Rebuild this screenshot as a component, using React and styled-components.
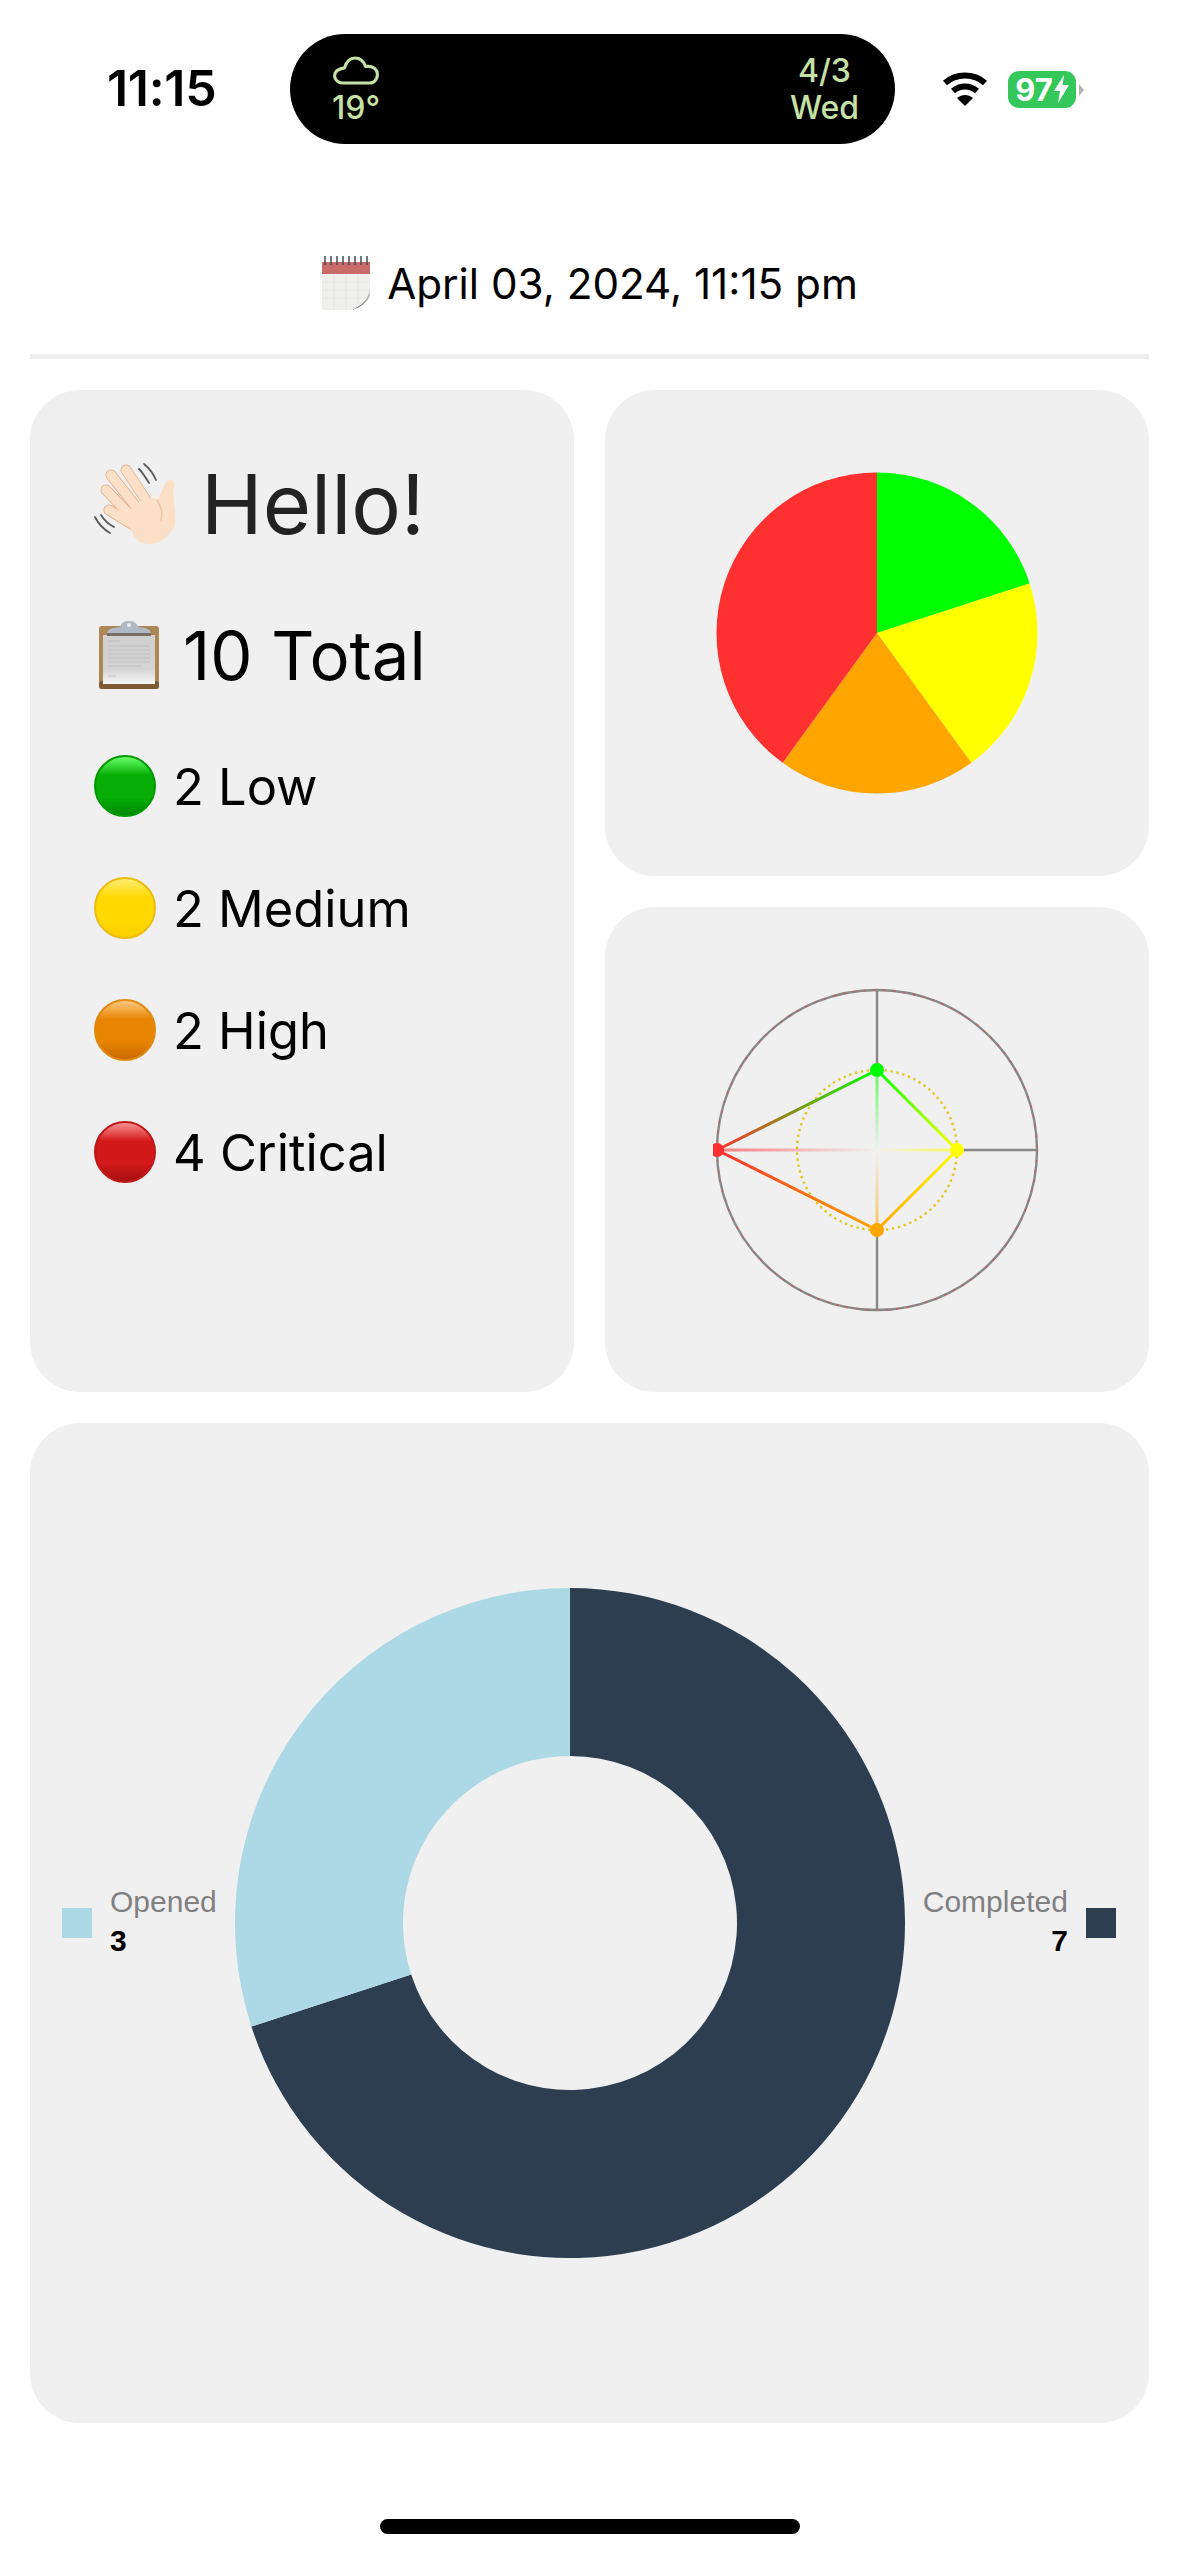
import React from 'react';
import styled, { createGlobalStyle } from 'styled-components';

const GlobalStyle = createGlobalStyle`
  html, body {
    margin: 0;
    padding: 0;
    background: #fff;
    font-family: Inter, "Liberation Sans", sans-serif;
  }
`;

const Page = styled.div`
  width: 1179px;
  height: 2556px;
  overflow: hidden;
  display: flex;
  flex-direction: column;
`;

const StatusBar = styled.div`
  display: flex;
  align-items: center;
  height: 110px;
  padding: 34px 0 0 107px;
`;

const Clock = styled.div`
  width: 183px;
  flex: none;
  font-size: 50px;
  font-weight: 600;
  letter-spacing: -0.3px;
  margin-top: -3px;
  color: #000;
`;

const Island = styled.div`
  width: 605px;
  height: 110px;
  flex: none;
  box-sizing: border-box;
  border-radius: 55px;
  background: #000;
  color: #c5e1a5;
  display: flex;
  align-items: center;
  justify-content: space-between;
  padding: 0 36px 0 42px;
  margin-right: 47px;
`;

const IslandColumn = styled.div`
  display: flex;
  flex-direction: column;
  align-items: center;
  font-size: 32px;
  font-weight: 500;
  line-height: 37px;
`;

const WeatherColumn = styled(IslandColumn)`
  gap: 3px;
  padding-top: 3px;
`;

const StatusIcons = styled.div`
  display: flex;
  align-items: center;
  gap: 20px;
`;

const Battery = styled.div`
  position: relative;
  width: 68px;
  height: 37px;
  border-radius: 11px;
  background: #34c759;
  color: #fff;
  font-size: 31px;
  font-weight: 700;
  display: flex;
  align-items: center;
  justify-content: center;
  gap: 1px;
  &::after {
    content: '';
    position: absolute;
    right: -8px;
    top: 13px;
    border-left: 5px solid #b5b5b5;
    border-top: 6px solid transparent;
    border-bottom: 6px solid transparent;
  }
`;

const DateHeader = styled.div`
  display: flex;
  justify-content: center;
  align-items: center;
  gap: 16px;
  padding: 112px 0 44px;
  font-size: 42.2px;
  color: #000;
`;

const Divider = styled.div`
  height: 5px;
  margin: 0 30px;
  background: #eee;
`;

const Dashboard = styled.div`
  display: grid;
  grid-template-columns: 544px 544px;
  grid-template-rows: 486px 485px;
  gap: 31px;
  padding: 31px 30px 0;
`;

const Card = styled.div`
  background: #f0f0f0;
  border-radius: 50px;
  display: flex;
  align-items: center;
  justify-content: center;
`;

const SummaryCard = styled(Card)`
  grid-row: span 2;
  flex-direction: column;
  align-items: flex-start;
  justify-content: flex-start;
  box-sizing: border-box;
  padding: 53px 0 0 63px;
`;

const Greeting = styled.div`
  display: flex;
  align-items: center;
  gap: 24px;
  height: 122px;
  font-size: 83px;
  color: #222;
`;

const TotalRow = styled.div`
  display: flex;
  align-items: center;
  gap: 23px;
  height: 180px;
  padding-left: 5px;
  font-size: 67px;
  color: #000;
`;

const LevelList = styled.div`
  display: flex;
  flex-direction: column;
  gap: 40px;
`;

const LevelRow = styled.div`
  display: flex;
  align-items: center;
  gap: 17px;
  height: 82px;
  padding-left: 1px;
  font-size: 50.6px;
  color: #000;
`;

const Ball = styled.span`
  width: 62px;
  height: 62px;
  flex: none;
  box-sizing: border-box;
  border-radius: 50%;
  border: 2px solid ${(props) => props.$edge};
  background: linear-gradient(
    ${(props) => props.$light} 0%,
    ${(props) => props.$mid} 32%,
    ${(props) => props.$mid} 70%,
    ${(props) => props.$dark} 100%
  );
`;

const DonutCard = styled(Card)`
  height: 1000px;
  margin: 31px 30px 0;
  justify-content: flex-start;
  gap: 18px;
  padding-left: 32px;
`;

const Legend = styled.div`
  display: flex;
  align-items: center;
  gap: 18px;
  font-family: "Liberation Sans", Arial, sans-serif;
  font-size: 30px;
  line-height: 37px;
  text-align: ${(props) => (props.$right ? 'right' : 'left')};
`;

const Swatch = styled.span`
  width: 30px;
  height: 30px;
  flex: none;
  background: ${(props) => props.$color};
`;

const LegendText = styled.div`
  margin-top: -4px;
`;

const LegendName = styled.div`
  color: #808080;
  margin-bottom: 2px;
`;

const LegendValue = styled.div`
  color: #000;
  font-weight: 700;
`;

const HomeIndicator = styled.div`
  width: 420px;
  height: 15px;
  margin: 96px auto 0;
  border-radius: 8px;
  background: #000;
`;

const polar = (cx, cy, r, deg) => {
  const a = ((deg - 90) * Math.PI) / 180;
  return [cx + r * Math.cos(a), cy + r * Math.sin(a)];
};

const slice = (cx, cy, r, from, to) => {
  const [x1, y1] = polar(cx, cy, r, from);
  const [x2, y2] = polar(cx, cy, r, to);
  return `M${cx} ${cy}L${x1} ${y1}A${r} ${r} 0 ${to - from > 180 ? 1 : 0} 1 ${x2} ${y2}Z`;
};

const ring = (cx, cy, r, inner, from, to) => {
  const [x1, y1] = polar(cx, cy, r, from);
  const [x2, y2] = polar(cx, cy, r, to);
  const [x3, y3] = polar(cx, cy, inner, to);
  const [x4, y4] = polar(cx, cy, inner, from);
  const large = to - from > 180 ? 1 : 0;
  return `M${x1} ${y1}A${r} ${r} 0 ${large} 1 ${x2} ${y2}L${x3} ${y3}A${inner} ${inner} 0 ${large} 0 ${x4} ${y4}Z`;
};

const PIE = [
  { color: '#00ff00', from: 0, to: 72 },
  { color: '#ffff00', from: 72, to: 144 },
  { color: '#ffa500', from: 144, to: 216 },
  { color: '#ff3030', from: 216, to: 360 },
];

const PieChart = () => (
  <svg width="322" height="322" viewBox="0 0 322 322">
    {PIE.map((s) => (
      <path key={s.color} d={slice(161, 161, 160.5, s.from, s.to)} fill={s.color} />
    ))}
  </svg>
);

// radar points, clockwise from the top
const RADAR = [
  { id: 'g', color: '#00ff00', x: 164, y: 84 },
  { id: 'y', color: '#ffff00', x: 244, y: 164 },
  { id: 'o', color: '#ffa500', x: 164, y: 244 },
  { id: 'r', color: '#ff3030', x: 4, y: 164 },
];

const RadarChart = () => (
  <svg width="328" height="328" viewBox="0 0 328 328">
    <defs>
      {RADAR.map((p, i) => {
        const next = RADAR[(i + 1) % 4];
        return (
          <React.Fragment key={p.id}>
            <linearGradient id={`edge-${p.id}`} gradientUnits="userSpaceOnUse" x1={p.x} y1={p.y} x2={next.x} y2={next.y}>
              <stop offset="0" stopColor={p.color} />
              <stop offset="1" stopColor={next.color} />
            </linearGradient>
            <linearGradient id={`spoke-${p.id}`} gradientUnits="userSpaceOnUse" x1={p.x} y1={p.y} x2="164" y2="164">
              <stop offset="0" stopColor={p.color} stopOpacity="0.6" />
              <stop offset="1" stopColor={p.color} stopOpacity="0" />
            </linearGradient>
          </React.Fragment>
        );
      })}
    </defs>
    <circle cx="164" cy="164" r="160" fill="none" stroke="#888" strokeWidth="2.4" />
    <circle cx="164" cy="164" r="160" fill="none" stroke="#ff3030" strokeOpacity="0.6" strokeWidth="1.2" strokeDasharray="2 8" />
    <path d="M164 4V84M164 244V324M244 164H324" stroke="#888" strokeWidth="2.4" fill="none" />
    <circle cx="164" cy="164" r="80" fill="none" stroke="#e0c820" strokeWidth="2.4" strokeDasharray="2.4 3.6" />
    {RADAR.map((p) => (
      <line key={p.id} x1={p.x} y1={p.y} x2="164" y2="164" stroke={`url(#spoke-${p.id})`} strokeWidth="3" />
    ))}
    {RADAR.map((p, i) => {
      const next = RADAR[(i + 1) % 4];
      return <line key={p.id} x1={p.x} y1={p.y} x2={next.x} y2={next.y} stroke={`url(#edge-${p.id})`} strokeWidth="3" />;
    })}
    {RADAR.map((p) => (
      <circle key={p.id} cx={p.x} cy={p.y} r="7" fill={p.color} />
    ))}
  </svg>
);

const DonutChart = () => (
  <svg width="670" height="670" viewBox="0 0 670 670">
    <path d={ring(335, 335, 335, 167, 0, 252)} fill="#2c3e50" />
    <path d={ring(335, 335, 335, 167, 252, 360)} fill="#add8e6" />
  </svg>
);

const CloudIcon = () => (
  <svg width="46" height="31" viewBox="0 0 44 27" fill="none" stroke="#c5e1a5" strokeWidth="3" strokeLinejoin="round">
    <path d="M9 25.5H35C40 25.5 42.5 21 42.5 17.5C42.5 13 39 9.5 34 9.5L31 9.5C29 4 25 1.5 21 1.5C15.5 1.5 12.5 6 11 11C5 12 1.5 15 1.5 18.5C1.5 22.5 5 25.5 9 25.5Z" />
  </svg>
);

const WifiIcon = () => (
  <svg width="46" height="36" viewBox="0 0 46 36" fill="none" stroke="#000" strokeWidth="6">
    <path d="M3 12C14 2 32 2 43 12" />
    <path d="M11 20C18 14 28 14 35 20" />
    <path d="M15 27L23 35L31 27C26 23 20 23 15 27Z" fill="#000" stroke="none" />
  </svg>
);

const BoltIcon = () => (
  <svg width="15" height="28" viewBox="0 0 15 28" fill="#fff">
    <path d="M10 0L0 16H6L4 28L15 10H8.5Z" />
  </svg>
);

const CalendarIcon = () => (
  <svg width="50" height="54" viewBox="0 0 50 54">
    <defs>
      <linearGradient id="curl" x1="0" y1="1" x2="1" y2="0">
        <stop offset="0" stopColor="#444" />
        <stop offset="1" stopColor="#ddd" />
      </linearGradient>
    </defs>
    <rect x="1" y="8" width="48" height="46" fill="#efefed" />
    <path d="M1 26H49M1 34H49M1 42H49M13 18V54M25 18V54M37 18V54" stroke="#e6e6e6" strokeWidth="1" />
    <rect x="1" y="6" width="48" height="12" fill="#c66a6a" />
    <path d="M4 0V9M10 0V9M16 0V9M22 0V9M28 0V9M34 0V9M40 0V9M46 0V9" stroke="#47484d" strokeWidth="1.5" />
    <path d="M49 32C46 44 40 50 30 54H49Z" fill="#fff" />
    <path d="M49 32C47 44 41 50 30 54C40 52 46 46 49 40Z" fill="url(#curl)" />
  </svg>
);

const ClipboardIcon = () => (
  <svg width="62" height="68" viewBox="0 0 62 68">
    <defs>
      <linearGradient id="sheet" x1="0" y1="0" x2="0" y2="1">
        <stop offset="0" stopColor="#cfcfcf" />
        <stop offset="0.7" stopColor="#d4d4d4" />
        <stop offset="1" stopColor="#f6f6f6" />
      </linearGradient>
    </defs>
    <rect x="1" y="5" width="60" height="63" rx="3" fill="#ad8755" />
    <rect x="1" y="60" width="60" height="8" rx="3" fill="#7d5a33" />
    <rect x="5" y="14" width="52" height="49" fill="url(#sheet)" />
    <path d="M10 20H22M10 25H52M10 29H52M10 33H52M10 37H52M10 41H52M10 45H44M10 55H18" stroke="#b8b8b8" strokeWidth="0.7" />
    <path d="M9 13C9 8 14 7 22 6C24 0 28 0 31 0C34 0 38 0 40 6C48 7 53 8 53 13Z" fill="#aebbc7" />
    <rect x="9" y="12" width="44" height="3" fill="#7a6f68" />
    <circle cx="31" cy="4" r="2" fill="#e8eef2" />
  </svg>
);

const HandIcon = () => (
  <svg width="84" height="84" viewBox="0 0 84 84" fill="none" strokeLinecap="round">
    <path d="M51 2C56 6 60 11 63 18M46 7C50 11 53 16 56 21M2 55C5 61 10 67 17 71M8 53C11 58 15 62 21 65" stroke="#5c5c5c" strokeWidth="1.8" />
    <g stroke="#e0ac84" strokeWidth="11">
      <path d="M33 8L53 38" />
      <path d="M18 13L44 46" />
      <path d="M13 28L38 54" />
      <path d="M16 48L42 64" />
    </g>
    <path d="M56 82C68 82 81 72 82 60C83 48 79 36 81 22C81 17 75 16 72 21C69 28 68 33 64 38C58 32 42 40 36 50C34 58 36 68 42 75C46 80 50 82 56 82Z" fill="#fbdfc6" />
    <g stroke="#fbdfc6" strokeWidth="9.5">
      <path d="M33 8L53 38" />
      <path d="M18 13L44 46" />
      <path d="M13 28L38 54" />
      <path d="M16 48L42 64" />
    </g>
    <path d="M64 38C68 44 70 50 68 58" stroke="#ecc8aa" strokeWidth="1.5" />
  </svg>
);

const LEVELS = [
  { label: '2 Low', edge: '#029a02', light: '#66ff66', mid: '#05ad05', dark: '#028a02' },
  { label: '2 Medium', edge: '#eebb10', light: '#ffec70', mid: '#ffd900', dark: '#fbcf00' },
  { label: '2 High', edge: '#e08a10', light: '#fcc880', mid: '#e88400', dark: '#c96800' },
  { label: '4 Critical', edge: '#c01818', light: '#f99090', mid: '#d21818', dark: '#a81010' },
];

const App = () => (
  <Page>
    <GlobalStyle />
    <StatusBar>
      <Clock>11:15</Clock>
      <Island>
        <WeatherColumn>
          <CloudIcon />
          <span>19°</span>
        </WeatherColumn>
        <IslandColumn>
          <span>4/3</span>
          <span>Wed</span>
        </IslandColumn>
      </Island>
      <StatusIcons>
        <WifiIcon />
        <Battery>
          97
          <BoltIcon />
        </Battery>
      </StatusIcons>
    </StatusBar>
    <DateHeader>
      <CalendarIcon />
      <span>April 03, 2024, 11:15 pm</span>
    </DateHeader>
    <Divider />
    <Dashboard>
      <SummaryCard>
        <Greeting>
          <HandIcon />
          Hello!
        </Greeting>
        <TotalRow>
          <ClipboardIcon />
          10 Total
        </TotalRow>
        <LevelList>
          {LEVELS.map((level) => (
            <LevelRow key={level.label}>
              <Ball $edge={level.edge} $light={level.light} $mid={level.mid} $dark={level.dark} />
              {level.label}
            </LevelRow>
          ))}
        </LevelList>
      </SummaryCard>
      <Card>
        <PieChart />
      </Card>
      <Card>
        <RadarChart />
      </Card>
    </Dashboard>
    <DonutCard>
      <Legend>
        <Swatch $color="#add8e6" />
        <LegendText>
          <LegendName>Opened</LegendName>
          <LegendValue>3</LegendValue>
        </LegendText>
      </Legend>
      <DonutChart />
      <Legend $right>
        <LegendText>
          <LegendName>Completed</LegendName>
          <LegendValue>7</LegendValue>
        </LegendText>
        <Swatch $color="#2c3e50" />
      </Legend>
    </DonutCard>
    <HomeIndicator />
  </Page>
);

export default App;
